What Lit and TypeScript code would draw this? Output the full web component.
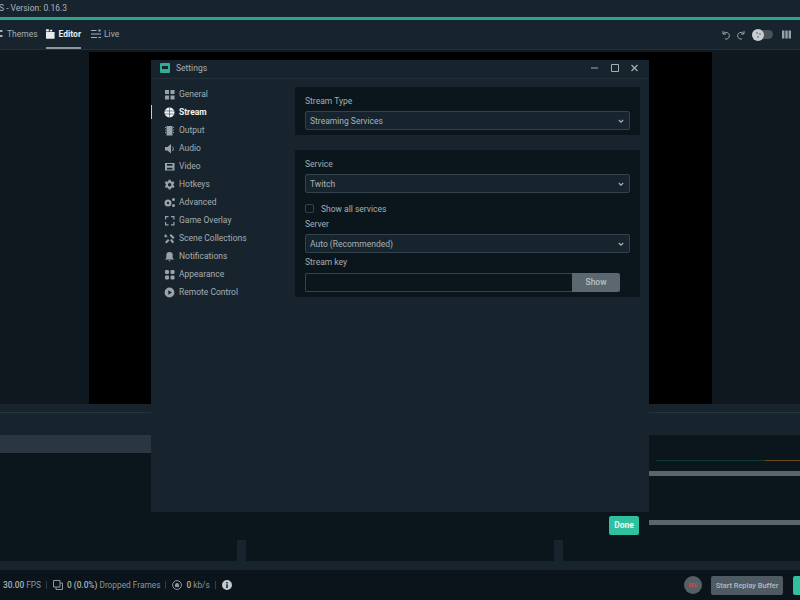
import { LitElement, css, html, svg } from 'lit';
import { customElement } from 'lit/decorators.js';

const icons: Record<string, unknown> = {
  general: svg`<path d="M1 1h4v4H1zM6.500 1h4v4h-4zM1 6.500h4v4H1zM6.500 6.500h4v4h-4z"/>`,
  stream: svg`<circle cx="5.500" cy="5.500" r="5"/><path d="M0.500 4h10M0.500 7h10M5.500 0.500v10" stroke="#17242d" stroke-width=".5" fill="none"/>`,
  output: svg`<path d="M2.500 1h6v9.500h-6z"/><path d="M1 2.500h1M1 5h1M1 7.500h1M9 2.500h1M9 5h1M9 7.500h1" stroke="currentColor" stroke-width=".9"/>`,
  audio: svg`<path d="M1 4h2.500L7 1v9.500L3.500 7.500H1z"/><path d="M8.300 3.500a3 3 0 0 1 0 4.500" stroke="currentColor" fill="none"/>`,
  video: svg`<path d="M1 2h9.500v7.500H1zM3 3v1.800h5.500V3zM3 6.700v1.800h5.500V6.700z" fill-rule="evenodd"/>`,
  hotkeys: svg`<path d="M4.600.8h2l.3 1.400 1.200.6 1.300-.6 1 1.800-1 1 .1 1.300 1 1-1 1.700-1.400-.5-1.100.7-.3 1.400h-2l-.3-1.400-1.200-.7-1.300.5-1-1.700 1-1V4.900L.8 4l1-1.800 1.300.6 1.200-.6zM5.600 4a1.700 1.700 0 1 0 0 3.500 1.700 1.700 0 0 0 0-3.500z" fill-rule="evenodd"/>`,
  advanced: svg`<circle cx="4" cy="6" r="3.500"/><circle cx="4" cy="6" r="1.200" fill="#17242d"/><circle cx="9.500" cy="2.500" r="1.500"/><circle cx="9.500" cy="8.500" r="1.500"/>`,
  overlay: svg`<path d="M1 1h3.500v1.200H2.200v2.300H1zM7 1h3.500v3.500H9.300V2.200H7zM1 7h1.200v2.300h2.300v1.200H1zM9.300 7h1.200v3.500H7V9.300h2.300z"/>`,
  scenes: svg`<path d="M1 9l3-3 1.500 1.500-3 3zM5.500 2.500l1.500-1.500 3.500 3.500-1.500 1.500zM6 7l2-1 2 3-1.500 1.500zM1.500 1l1 1.500L4 3 2.500 3.800 2 5.200 1.200 3.800 0 3.200z"/>`,
  bell: svg`<path d="M5.500 1a3.200 3.200 0 0 1 3.200 3.200V7l1.500 1.500H.8L2.300 7V4.200A3.200 3.200 0 0 1 5.500 1zM4.300 9.300h2.400L5.500 10.600z"/>`,
  appearance: svg`<rect x="1" y="1" width="4" height="4" rx="1.200"/><rect x="6.500" y="1" width="4" height="4" rx="1.200"/><rect x="1" y="6.500" width="4" height="4" rx="1.200"/><rect x="6.500" y="6.500" width="4" height="4" rx="1.200"/>`,
  remote: svg`<path d="M5.500.6a4.900 4.900 0 1 1 0 9.800 4.900 4.900 0 0 1 0-9.800zM4.300 3.300v4.400l3.600-2.200z" fill-rule="evenodd"/>`,
};

const menu = [
  ['General', 'general'],
  ['Stream', 'stream'],
  ['Output', 'output'],
  ['Audio', 'audio'],
  ['Video', 'video'],
  ['Hotkeys', 'hotkeys'],
  ['Advanced', 'advanced'],
  ['Game Overlay', 'overlay'],
  ['Scene Collections', 'scenes'],
  ['Notifications', 'bell'],
  ['Appearance', 'appearance'],
  ['Remote Control', 'remote'],
];

@customElement('app-root')
export class AppRoot extends LitElement {
  static styles = css`
    :host {
      display: block;
      position: relative;
      width: 800px;
      height: 600px;
      overflow: hidden;
      background: #0b161c;
      font-family: Roboto, 'Liberation Sans', sans-serif;
      font-size: 8.5px;
      color: #a3aeb4;
    }
    svg { display: block; fill: currentColor; }

    .shell { display: flex; flex-direction: column; height: 600px; }
    .title {
      height: 17px;
      background: #17242d;
      line-height: 16px;
      white-space: nowrap;
      color: #aab4b9;
    }
    .title span { display: block; margin-left: -1px; }
    .accent { height: 3px; background: #2ba68c; }
    .nav {
      height: 30px;
      box-sizing: border-box;
      background: #17242d;
      border-bottom: 1px solid #243039;
      display: flex;
      align-items: center;
    }
    .tab {
      display: flex;
      align-items: center;
      gap: 4px;
      height: 100%;
      box-sizing: border-box;
      border-bottom: 2px solid transparent;
    }
    .tab.on { color: #e8ecee; font-weight: 700; border-bottom-color: #8d979d; width: 35px; margin-right: 10px; }
    .tab.themes { width: 46px; }
    .tab.live { gap: 3px; }
    .nav .spacer { flex: 1; }
    .tools { display: flex; align-items: center; padding-right: 9px; color: #98a3a9; }
    .toggle { width: 21px; height: 9px; border-radius: 5px; background: #46535b; position: relative; margin: 0 9px 0 7px; }
    .knob { position: absolute; left: 0; top: -1.5px; width: 12px; height: 12px; border-radius: 50%; background: #c9ced1; }
    .knob::after { content: ''; position: absolute; left: 4px; top: 3px; width: 2px; height: 2px; border-radius: 50%; background: #7d878d; box-shadow: 3px 1px 0 #7d878d, 1px 4px 0 #7d878d; }

    .stage { height: 354px; display: flex; background: #0e181e; }
    .canvas { width: 623px; margin: 2px 0 0 89px; background: #000; }

    .lower { flex: 1; display: flex; flex-direction: column; }
    .head { height: 31px; background: #17242d; padding-top: 8px; box-sizing: border-box; }
    .head i { display: block; height: 1px; background: #26343d; }
    .panes { flex: 1; display: flex; }
    .scenes { width: 400px; }
    .scenes .row { height: 18px; background: #2a3740; }
    .mixer { flex: 1; padding: 25px 0 0 249px; }
    .meter { height: 1px; background: linear-gradient(90deg, #0b161c 0 7px, #123a35 7px 116px, #6b4a1c 116px); }
    .track { height: 5px; background: #5a666e; margin-top: 10px; }
    .track + .track { margin-top: 44px; }
    .feet { height: 21px; display: flex; justify-content: space-between; padding: 0 237px; }
    .feet i { display: block; width: 9px; background: #17242d; }
    .strip { height: 9px; background: #17242d; }
    .status {
      height: 30px;
      background: #0a141a;
      display: flex;
      align-items: center;
      white-space: nowrap;
      padding-left: 3px;
      color: #8b979e;
      font-size: 8.3px;
    }
    .status b { color: #a9b3b8; font-weight: 500; }
    .status .sep { width: 1px; height: 8px; background: #333f47; margin: 0 6px 0 5px; }
    .status svg { margin-right: 4px; }
    .status .fill { flex: 1; }
    .rec {
      width: 18px;
      height: 18px;
      border-radius: 50%;
      background: #555f66;
      color: #d8434c;
      font-size: 5px;
      font-weight: 700;
      line-height: 18px;
      text-align: center;
      margin-right: 9px;
    }
    .replay {
      width: 72px;
      height: 19px;
      border-radius: 2px;
      background: #4f5b63;
      color: #b4bcc1;
      font-size: 7.4px;
      font-weight: 500;
      line-height: 19px;
      text-align: center;
      margin-right: 10px;
    }
    .golive { width: 7px; height: 19px; background: #2fc19f; border-radius: 2px 0 0 2px; }

    .modal {
      position: absolute;
      left: 151px;
      top: 60px;
      width: 498px;
      height: 480px;
      display: flex;
      flex-direction: column;
    }
    .win { flex: 1; min-height: 0; background: #17242d; display: flex; flex-direction: column; }
    .bar {
      height: 18px;
      box-sizing: content-box;
      flex: none;
      display: flex;
      align-items: center;
      padding: 0 11px 0 9px;
      border-bottom: 1px solid #212f38;
    }
    .bar > * { position: relative; top: -1px; }
    .logo { width: 10px; height: 10px; background: #2fae92; border-radius: 1px; margin-right: 6px; }
    .logo::after { content: ''; position: absolute; left: 2px; top: 3px; width: 6px; height: 3px; background: #17242d; }
    .bar .spacer { flex: 1; }
    .ctl { display: flex; gap: 12.5px; align-items: center; }
    .body { flex: 1; display: flex; min-height: 0; }
    .side { width: 144px; padding-top: 6px; }
    .item { height: 18px; display: flex; align-items: center; padding-left: 13px; gap: 4px; white-space: nowrap; position: relative; }
    .item svg { color: #99a4aa; flex: none; }
    .item.on { color: #f0f3f4; font-weight: 700; }
    .item.on svg { color: #f0f3f4; }
    .item.on::before { content: ''; position: absolute; left: 0; top: 2px; width: 1px; height: 14px; background: #c5cbce; }
    .content { flex: 1; padding: 8px 9px 0 0; }
    .panel { background: #0b161c; padding: 9px 10px 5px; margin-bottom: 15px; }
    .lbl { line-height: 11px; margin-bottom: 4px; }
    .sel {
      box-sizing: border-box;
      height: 19px;
      background: #17242d;
      border: 1px solid #33434d;
      border-radius: 2px;
      display: flex;
      align-items: center;
      justify-content: space-between;
      padding: 0 5px 0 4px;
      color: #a9b3b8;
    }
    .sel svg { color: #a9b3b8; }
    .check { display: flex; align-items: center; gap: 7px; height: 11px; margin: 10px 0 5px; }
    .box { width: 9px; height: 9px; box-sizing: border-box; border: 1px solid #33434d; border-radius: 2px; }
    .keyrow { display: flex; height: 19px; padding-right: 10px; }
    .key { flex: 1; box-sizing: border-box; border: 1px solid #33434d; border-right: 0; border-radius: 2px 0 0 2px; }
    .show { width: 48px; background: #5b6870; border-radius: 0 2px 2px 0; color: #b9c1c5; font-weight: 500; line-height: 19px; text-align: center; }
    .lbl.key-lbl { margin-top: 4px; margin-bottom: 5px; }
    .foot { height: 28px; flex: none; background: #0b161c; display: flex; justify-content: flex-end; padding: 4px 10px 0 0; box-sizing: border-box; }
    .done { width: 30px; height: 19px; background: #2fc19f; border-radius: 2px; color: #e9f8f4; font-weight: 700; line-height: 19px; text-align: center; }
  `;

  private sel(text: string) {
    return html`<div class="sel"><span>${text}</span>
      <svg width="6" height="6" viewBox="0 0 6 6"><path d="M.8 2l2.200 2.200L5.200 2" fill="none" stroke="currentColor" stroke-width="1.100"/></svg>
    </div>`;
  }

  render() {
    return html`
      <div class="shell">
        <div class="title"><span>S - Version: 0.16.3</span></div>
        <div class="accent"></div>
        <div class="nav">
          <div class="tab themes">
            <svg width="3" height="9" viewBox="0 0 3 9"><path d="M0 1h2.500v2H0zM0 6h2.500v2H0z"/></svg>
            <span>Themes</span>
          </div>
          <div class="tab on">
            <svg width="9" height="10" viewBox="0 0 9 10"><path d="M0 3h9v7H0zM0 0h3v2.500H0zM4 .5h2.500v2H4z"/></svg>
            <span>Editor</span>
          </div>
          <div class="tab live">
            <svg width="10" height="10" viewBox="0 0 10 10"><path d="M0 1h5.500v1H0zM7.500 .5h2v2h-2zM0 4.500h10v1H0zM0 8h6v1H0zM7.500 8h2.500v1H7.500z"/></svg>
            <span>Live</span>
          </div>
          <div class="spacer"></div>
          <div class="tools">
            <svg width="9" height="10" viewBox="0 0 9 10" style="margin-right:5px"><path d="M1 1v3h3M1.200 3.800A3.400 3.400 0 1 1 3 9" fill="none" stroke="currentColor"/></svg>
            <svg width="9" height="10" viewBox="0 0 9 10"><path d="M8 1v3H5M7.800 3.800A3.400 3.400 0 1 0 6 9" fill="none" stroke="currentColor"/></svg>
            <div class="toggle"><div class="knob"></div></div>
            <svg width="9" height="9" viewBox="0 0 9 9"><path d="M0 .5h2.400v8H0zM3.300 .5h2.400v8H3.300zM6.600 .5H9v8H6.600z"/></svg>
          </div>
        </div>
        <div class="stage"><div class="canvas"></div></div>
        <div class="lower">
          <div class="head"><i></i></div>
          <div class="panes">
            <div class="scenes"><div class="row"></div></div>
            <div class="mixer">
              <div class="meter"></div>
              <div class="track"></div>
              <div class="track"></div>
            </div>
          </div>
          <div class="feet"><i></i><i></i></div>
          <div class="strip"></div>
          <div class="status">
            <b>30.00</b>&nbsp;FPS
            <span class="sep"></span>
            <svg width="10" height="10" viewBox="0 0 10 10"><path d="M.5.500h6.500v6.500H.5zM3 7v2.500h6.500V3H7" fill="none" stroke="currentColor"/></svg>
            <b>0 (0.0%)</b>&nbsp;Dropped Frames
            <span class="sep"></span>
            <svg width="10" height="10" viewBox="0 0 10 10"><circle cx="5" cy="5" r="4.400" fill="none" stroke="currentColor"/><path d="M3 7h4V5a2 2 0 0 0-4 0z"/></svg>
            <b>0</b>&nbsp;kb/s
            <span class="sep"></span>
            <svg width="10" height="10" viewBox="0 0 10 10" style="color:#c4cbce"><path d="M5 0a5 5 0 1 1 0 10A5 5 0 0 1 5 0zM4.300 2v1.400h1.400V2zM4.300 4.300V8h1.400V4.300z" fill-rule="evenodd"/></svg>
            <span class="fill"></span>
            <div class="rec">REC</div>
            <div class="replay">Start Replay Buffer</div>
            <div class="golive"></div>
          </div>
        </div>
      </div>

      <div class="modal">
        <div class="win">
          <div class="bar">
            <div class="logo"></div>
            <span>Settings</span>
            <span class="spacer"></span>
            <div class="ctl">
              <svg width="7" height="8" viewBox="0 0 7 8"><path d="M0 3.500h7v1H0z"/></svg>
              <svg width="8" height="8" viewBox="0 0 8 8"><path d="M.5.500h7v7h-7z" fill="none" stroke="currentColor"/></svg>
              <svg width="7" height="8" viewBox="0 0 7 8"><path d="M.5 1l6 6M6.500 1l-6 6" stroke="currentColor" stroke-width="1.200"/></svg>
            </div>
          </div>
          <div class="body">
            <div class="side">
              ${menu.map(
                ([name, icon]) => html`<div class="item ${name === 'Stream' ? 'on' : ''}">
                  <svg width="11" height="11" viewBox="0 0 11 11">${icons[icon]}</svg>
                  <span>${name}</span>
                </div>`,
              )}
            </div>
            <div class="content">
              <div class="panel">
                <div class="lbl">Stream Type</div>
                ${this.sel('Streaming Services')}
              </div>
              <div class="panel">
                <div class="lbl">Service</div>
                ${this.sel('Twitch')}
                <div class="check"><span class="box"></span><span>Show all services</span></div>
                <div class="lbl">Server</div>
                ${this.sel('Auto (Recommended)')}
                <div class="lbl key-lbl">Stream key</div>
                <div class="keyrow">
                  <div class="key"></div>
                  <div class="show">Show</div>
                </div>
              </div>
            </div>
          </div>
        </div>
        <div class="foot"><div class="done">Done</div></div>
      </div>
    `;
  }
}
